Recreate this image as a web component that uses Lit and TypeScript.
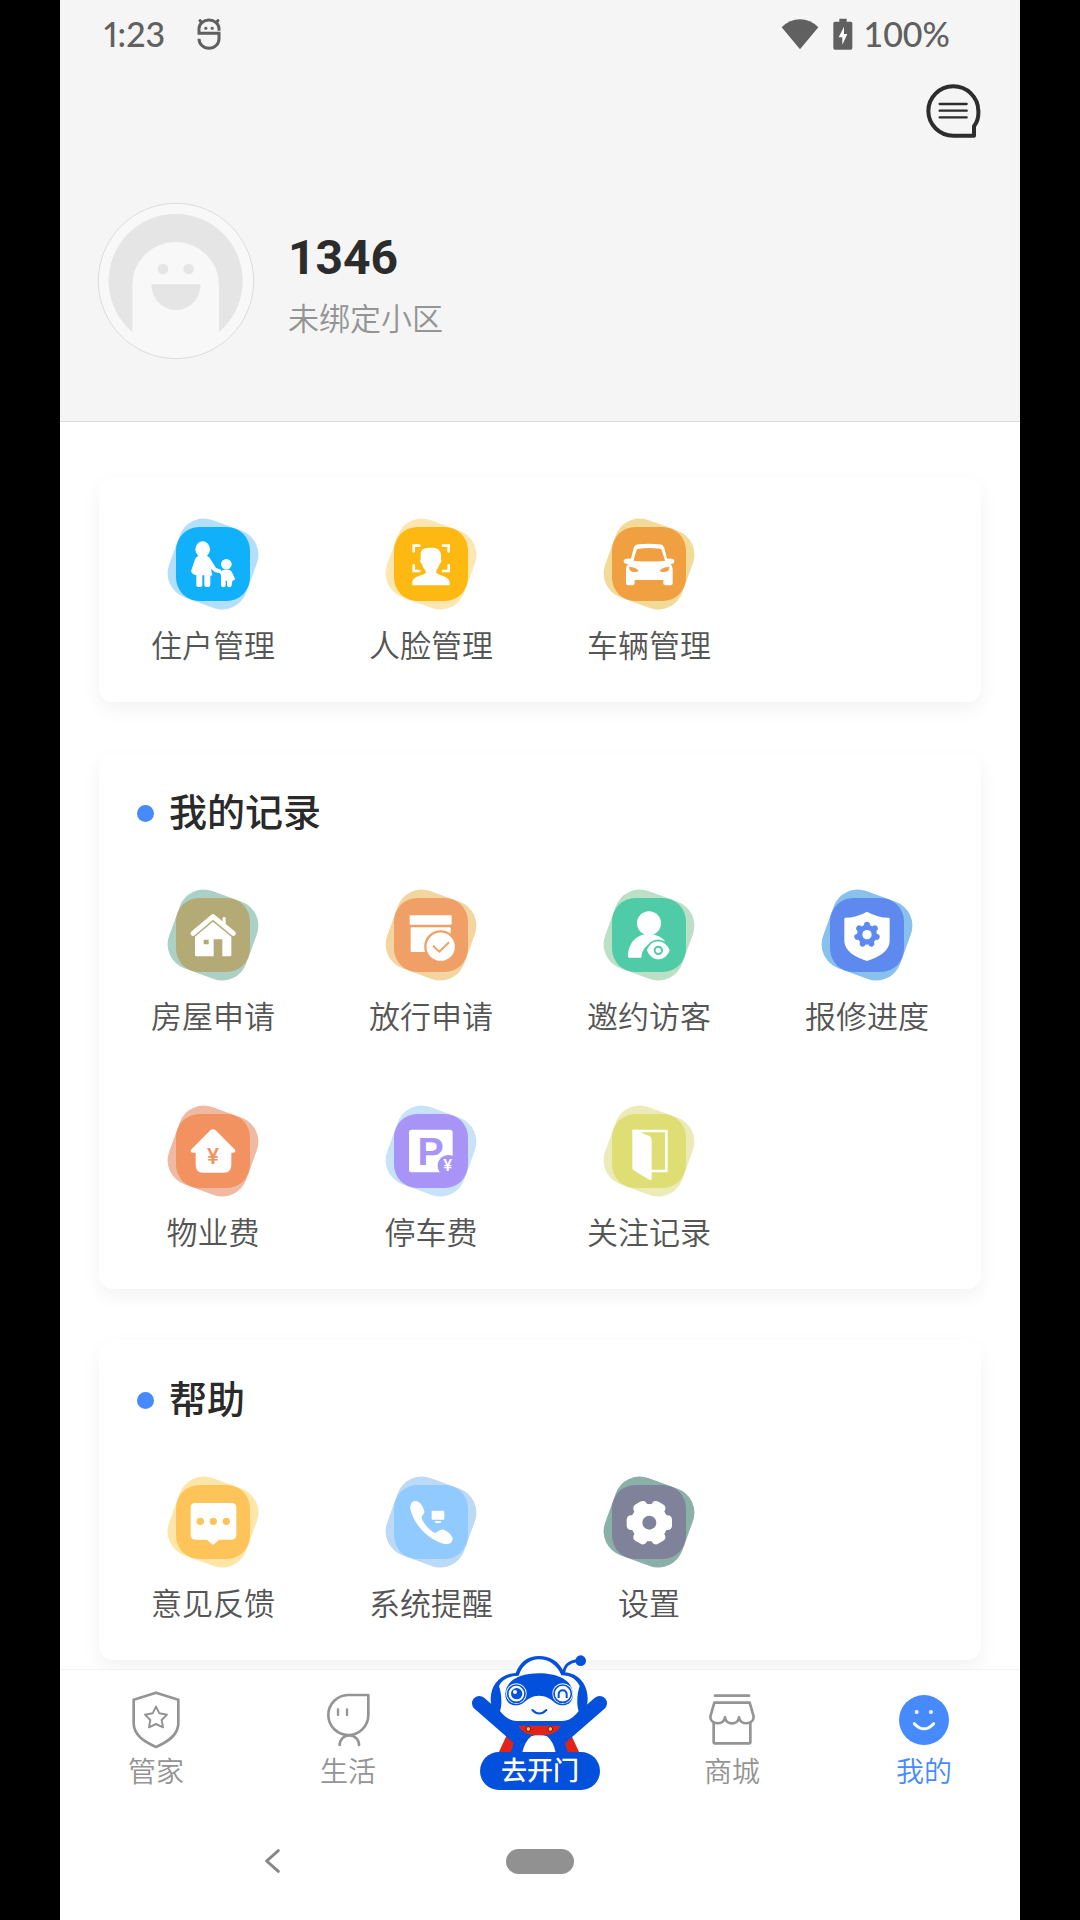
import { LitElement, css, html, svg, type SVGTemplateResult } from 'lit'
import { customElement, property } from 'lit/decorators.js'
import { classMap } from 'lit/directives/class-map.js'

interface Entry {
  label: string
  front: string
  back: string
  glyph: SVGTemplateResult
}

interface Section {
  title?: string
  entries: Entry[]
}

interface Tab {
  label: string
  active?: boolean
  glyph: SVGTemplateResult
}

const spokes = (count: number) => Array.from({ length: count }, (_, i) => (i * 360) / count)

const sections: Section[] = [
  {
    entries: [
      {
        label: '住户管理',
        front: '#10b0fa',
        back: '#b3dffa',
        glyph: svg`
          <ellipse cx="107" cy="94" rx="22" ry="24" />
          <path d="M94 114H121Q128 117 132 126L147 150L164 156L160 166L143 162L132 152L136 172L130 173V200Q130 207 121 207Q112 207 112 200V172H106V200Q106 207 97 207Q88 207 88 200V172Q76 170 72 160L84 124Q87 116 94 114Z" />
          <circle cx="178" cy="139" r="16" />
          <path d="M168 156H188Q194 158 197 167L205 184L196 189L194 202Q193 208 187 208Q181 208 180 202V188H176V202Q175 208 169 208Q163 208 162 202V172L158 164Z" />`,
      },
      {
        label: '人脸管理',
        front: '#fdb912',
        back: '#fde6b0',
        glyph: svg`
          <path fill="none" stroke="#fff" stroke-width="8" stroke-linecap="round" d="M86 100V83H103M174 83H191V100M86 142V159H103M174 159H191V142" />
          <path d="M107 108C107 90 124 89 137 89C156 88 168 96 168 112V124C171 128 169 136 164 138C160 150 156 154 154 158V164C156 172 194 172 194 194V202H82V194C82 172 120 172 122 164V158C118 154 114 150 111 138C106 136 104 128 107 124Z" />`,
      },
      {
        label: '车辆管理',
        front: '#f0a040',
        back: '#f2da98',
        glyph: svg`
          <path fill-rule="evenodd" d="M84 122L92 90Q96 80 106 79Q138 75 170 79Q180 80 184 90L192 122Q214 120 214 130Q214 138 203 138Q209 144 209 154V196Q209 202 203 202H187Q181 202 181 196V186H95V196Q95 202 89 202H75Q69 202 69 196V154Q69 144 75 138Q62 138 62 130Q62 120 84 122ZM91 128Q138 133 186 128L176 96Q174 92 170 92Q138 88 108 92Q103 92 101 96Z" />
          <path fill="#f0a040" d="M78 147Q96 146 107 158Q104 163 92 162Q78 160 78 147ZM199 147Q181 146 170 158Q173 163 185 162Q199 160 199 147Z" />`,
      },
    ],
  },
  {
    title: '我的记录',
    entries: [
      {
        label: '房屋申请',
        front: '#b4aa76',
        back: '#abd0c5',
        glyph: svg`
          <path fill="none" stroke="#fff" stroke-width="15" stroke-linecap="round" stroke-linejoin="round" d="M78 133L138 83L199 133" />
          <path d="M167 104V88Q167 84 171 84Q176 84 176 88V112Z" />
          <path fill-rule="evenodd" d="M84 143L138 98L193 143V198Q193 202 189 202H166V151H140V202H88Q84 202 84 198ZM110 152V166H125V152Z" />`,
      },
      {
        label: '放行申请',
        front: '#f0a066',
        back: '#f3d5a0',
        glyph: svg`
          <rect x="74" y="79" width="126" height="28" rx="3" />
          <rect x="77" y="115" width="120" height="74" rx="3" />
          <circle cx="167" cy="173" r="46" stroke="#f0a066" stroke-width="7" />
          <path fill="none" stroke="#f0a066" stroke-width="6" d="M144 170L163 188L192 160" />`,
      },
      {
        label: '邀约访客',
        front: '#50cba8',
        back: '#bcdfc8',
        glyph: svg`
          <circle cx="138" cy="103" r="36" />
          <path d="M75 202C75 162 102 136 132 136C156 134 178 144 187 158C150 152 116 170 115 206H79Q75 206 75 202Z" />
          <path stroke="#50cba8" stroke-width="5" d="M129 184Q140 154 166 154Q192 156 203 184Q192 212 166 214Q140 212 129 184Z" />
          <circle cx="166" cy="184" r="11" fill="none" stroke="#50cba8" stroke-width="6" />`,
      },
      {
        label: '报修进度',
        front: '#5e8af0',
        back: '#88c2ec',
        glyph: svg`
          <path d="M138 68Q170 86 203 86Q206 86 206 90V156C206 186 172 206 138 216C104 206 70 186 70 156V90Q70 86 73 86Q106 86 138 68Z" />
          <circle cx="138" cy="137" r="30" fill="#5e8af0" />
          ${spokes(7).map((a) => svg`<circle cx="138" cy="107" r="9" fill="#5e8af0" transform="rotate(${a} 138 137)" />`)}
          <circle cx="138" cy="137" r="14" />`,
      },
      {
        label: '物业费',
        front: '#f29260',
        back: '#efb9a2',
        glyph: svg`
          <path d="M130 76Q138 69 146 76L204 134Q208 142 198 143H193V180Q193 203 170 203H108Q86 203 86 180V143H78Q68 142 72 134Z" />
          <text class="yen" x="138" y="177" font-size="68" fill="#f29260">¥</text>`,
      },
      {
        label: '停车费',
        front: '#a893f6',
        back: '#c8e2f7',
        glyph: svg`
          <rect x="72" y="74" width="131" height="128" rx="8" />
          <text class="mark" x="137" y="181" font-size="118" fill="#a893f6">P</text>
          <circle cx="190" cy="182" r="32" fill="#a893f6" />
          <text class="yen" x="188" y="199" font-size="50">¥</text>`,
      },
      {
        label: '关注记录',
        front: '#dede74',
        back: '#ebebb8',
        glyph: svg`
          <path fill="none" stroke="#fff" stroke-width="8" d="M92 78H190V198H142" />
          <path d="M88 74H108Q112 84 138 92Q146 95 146 104V222Q146 228 140 225L92 196Q88 194 88 188Z" />`,
      },
    ],
  },
  {
    title: '帮助',
    entries: [
      {
        label: '意见反馈',
        front: '#fec45a',
        back: '#fee5a8',
        glyph: svg`
          <path d="M85 81H194Q208 81 208 95V177Q208 191 194 191H156L141 205Q138 207 135 205L120 191H85Q71 191 71 177V95Q71 81 85 81Z" />
          ${[100, 139, 178].map((x) => svg`<circle cx="${x}" cy="136" r="11" fill="#fec45a" />`)}`,
      },
      {
        label: '系统提醒',
        front: '#90caff',
        back: '#bcd9f5',
        glyph: svg`
          <path d="M90 75C104 74 114 90 118 106C120 114 108 118 110 127C117 146 136 164 150 171C160 168 164 158 176 161C190 166 202 178 203 188C203 200 192 206 178 204C130 192 86 146 76 98C75 84 81 76 90 75Z" />
          <rect x="140" y="104" width="38" height="27" rx="3" />
          <rect x="150" y="135" width="18" height="6" rx="3" />`,
      },
      {
        label: '设置',
        front: '#80829a',
        back: '#8ab0a8',
        glyph: svg`
          <circle cx="139" cy="140" r="56" />
          ${spokes(6).map((a) => svg`<rect x="117" y="72" width="44" height="40" rx="13" transform="rotate(${a + 30} 139 140)" />`)}
          <circle cx="139" cy="140" r="21" fill="#80829a" />`,
      },
    ],
  },
]

const leftTabs: Tab[] = [
  {
    label: '管家',
    glyph: svg`
      <path d="M78 8L145 29V100C145 135 115 155 78 171C42 155 11 135 11 100V29Z" />
      <path stroke-width="6" d="M78 50L88 70L111 74L95 90L99 112L78 102L57 112L61 90L45 74L68 70Z" />`,
  },
  {
    label: '生活',
    glyph: svg`
      <path d="M139 15H78A60 60 0 1 0 139 75Z" />
      <path stroke-width="7" d="M48 58V75M75 58V75" />
      <path d="M53 165A29 29 0 0 1 111 165" />`,
  },
]

const rightTabs: Tab[] = [
  {
    label: '商城',
    glyph: svg`
      <path d="M27 17H129" />
      <path d="M25 38H131L143 80C143 106 102 106 99 82C96 106 60 106 57 82C54 106 13 106 13 80Z" />
      <path d="M23 98V156Q23 160 27 160H129Q133 160 133 156V98" />`,
  },
  {
    label: '我的',
    active: true,
    glyph: svg`
      <circle cx="78" cy="90" r="75" fill="currentColor" stroke="none" />
      <circle cx="56" cy="66" r="6" fill="#fff" stroke="none" />
      <circle cx="99" cy="66" r="6" fill="#fff" stroke="none" />
      <path stroke="#fff" stroke-width="9" d="M49 101Q78 132 107 101" />`,
  },
]

@customElement('status-bar')
export class StatusBar extends LitElement {
  static styles = css`
    :host {
      display: flex;
      align-items: center;
      justify-content: space-between;
      height: 68px;
      padding: 0 70px 0 44px;
      color: #606060;
      font: 500 34px/40px Lato, 'Open Sans', sans-serif;
    }
    .group {
      display: flex;
      align-items: center;
    }
    .clock {
      min-width: 93px;
      font-variant-numeric: proportional-nums;
    }
    .debug {
      width: 24px;
      height: 32px;
    }
    .wifi {
      width: 38px;
      height: 32px;
      margin-right: 14px;
    }
    .battery {
      width: 20px;
      height: 32px;
      margin-right: 10px;
    }
  `

  render() {
    return html`
      <div class="group">
        <span class="clock">1:23</span>
        <svg class="debug" viewBox="0 0 72 96" fill="none" stroke="currentColor" stroke-width="9" aria-hidden="true">
          <path d="M66 38V32A30 26 0 0 0 6 32V46H66V62A30 29 0 0 1 6 62" />
          <path stroke-linecap="round" d="M9 8L14 13M63 8L58 13M26 31h1M45 31h1" />
        </svg>
      </div>
      <div class="group">
        <svg class="wifi" viewBox="0 0 114 96" fill="currentColor" aria-hidden="true">
          <path d="M57 94L2 28Q26 4 57 4Q88 4 112 28Z" />
        </svg>
        <svg class="battery" viewBox="0 0 60 96" aria-hidden="true">
          <path fill="currentColor" d="M19 2H41V11H53Q58 11 58 16V90Q58 95 53 95H6Q1 95 1 90V16Q1 11 6 11H19Z" />
          <path fill="#fff" d="M33 26L17 58H28V80L43 48H33Z" />
        </svg>
        <span>100%</span>
      </div>
    `
  }
}

@customElement('menu-card')
export class MenuCard extends LitElement {
  @property({ attribute: false }) section: Section = { entries: [] }

  static styles = css`
    :host {
      display: block;
      padding: 32px 5px 33px;
      border-radius: 14px;
      background: #fff;
      box-shadow: 0 8px 20px rgba(0, 0, 0, 0.05);
    }
    h2 {
      display: flex;
      align-items: center;
      gap: 15px;
      margin: 0 0 48px;
      padding-left: 33px;
      color: #2a2a2a;
      font-size: 38px;
      font-weight: 500;
      line-height: 56px;
    }
    h2::before {
      content: '';
      width: 17px;
      height: 17px;
      border-radius: 50%;
      background: #468afe;
    }
    .grid {
      display: grid;
      grid-template-columns: repeat(4, 1fr);
      row-gap: 65px;
    }
    .grid.bare {
      padding-top: 9px;
    }
    button {
      display: flex;
      flex-direction: column;
      align-items: center;
      gap: 15px;
      padding: 0;
      border: 0;
      background: none;
      color: #555;
      font: inherit;
      font-size: 31px;
      line-height: 44px;
      cursor: pointer;
    }
    svg {
      width: 92px;
      height: 92px;
    }
    .mark {
      font-family: 'Liberation Sans', Arial, sans-serif;
      font-weight: 700;
      text-anchor: middle;
    }
    .yen {
      font-family: Roboto, sans-serif;
      font-weight: 500;
      text-anchor: middle;
    }
  `

  render() {
    const { title, entries } = this.section
    return html`
      ${title ? html`<h2>${title}</h2>` : ''}
      <div class=${classMap({ grid: true, bare: !title })}>
        ${entries.map(
          (e) => html`
            <button type="button">
              <svg viewBox="0 0 276 276" fill="#fff" aria-hidden="true">
                <rect x="15" y="15" width="246" height="246" rx="76" fill=${e.back} transform="rotate(20 138 138)" />
                <rect x="27" y="27" width="222" height="222" rx="70" fill=${e.front} />
                ${e.glyph}
              </svg>
              <span>${e.label}</span>
            </button>
          `
        )}
      </div>
    `
  }
}

@customElement('tab-bar')
export class TabBar extends LitElement {
  static styles = css`
    :host {
      display: block;
      position: relative;
      border-top: 1px solid #f2f2f2;
      background: #fff;
    }
    nav {
      display: grid;
      grid-template-columns: repeat(5, 1fr);
      grid-template-rows: 132px;
    }
    button {
      display: flex;
      flex-direction: column;
      align-items: center;
      gap: 5px;
      padding: 20px 0 0;
      border: 0;
      background: none;
      color: #949494;
      font: inherit;
      font-size: 28px;
      line-height: 36px;
      cursor: pointer;
    }
    .active {
      color: #468afe;
    }
    .icon {
      width: 52px;
      height: 60px;
    }
    /* the robot is taller than the bar and grows out of its top edge */
    .door {
      justify-content: flex-end;
      gap: 0;
      min-height: 0;
      padding: 0 0 12px;
    }
    .robot {
      flex: none;
      width: 136px;
      height: 97px;
    }
    .pill {
      padding: 0 21px;
      border-radius: 19px;
      background: #0350dc;
      color: #fff;
      font-size: 26px;
      font-weight: 500;
      line-height: 38px;
    }
  `

  private renderTab(tab: Tab) {
    return html`
      <button type="button" class=${classMap({ active: !!tab.active })}>
        <svg class="icon" viewBox="0 0 156 180" fill="none" stroke="currentColor" stroke-width="8"
          stroke-linecap="round" stroke-linejoin="round" aria-hidden="true">${tab.glyph}</svg>
        <span>${tab.label}</span>
      </button>
    `
  }

  render() {
    return html`
      <nav>
        ${leftTabs.map((t) => this.renderTab(t))}
        <button type="button" class="door">
          <svg class="robot" viewBox="96 45 408 291" fill="#0350dc" aria-hidden="true">
            <path fill="#e2231a" d="M200 286L230 300L215 338H176ZM394 286L364 300L380 338H418Z" />
            <path d="M205 235H390L372 300L384 338H212L224 300Z" />
            <path stroke="#0350dc" stroke-width="44" stroke-linecap="round" d="M118 190L235 292M479 190L362 292" />
            <path fill="#fff" d="M247 338Q254 304 274 289Q297 281 321 289Q340 304 347 338Z" />
            <path fill="#e2231a" d="M235 257H363Q348 288 298 286Q250 288 235 257Z" />
            <g fill="#fbc34a" stroke="#7d1508" stroke-width="3">
              <circle cx="265" cy="267" r="7" />
              <circle cx="331" cy="267" r="7" />
            </g>
            <path fill="none" stroke="#0350dc" stroke-width="8" d="M370 102Q374 66 412 62" />
            <circle cx="422" cy="62" r="16" />
            <path d="M227 99C240 64 266 48 297 48C330 48 358 64 372 97C416 99 444 134 443 178C443 204 430 219 417 220L385 247H212L180 220C162 216 152 200 152 178C152 134 182 101 227 99Z" />
            <path fill="#fff" d="M236 107C247 73 272 58 297 58C326 58 352 75 364 106C394 106 410 120 419 138C410 165 410 195 416 213C402 231 388 243 365 243H230C210 243 194 231 180 213C186 195 186 165 177 138C186 119 205 108 236 107Z" />
            <path d="M196 162C198 118 244 100 297 100C350 100 397 118 399 162C399 184 386 196 368 196C340 196 338 168 297 167C258 168 256 196 228 196C208 196 196 184 196 162Z" />
            <g fill="#fff" stroke="#0350dc" stroke-width="5">
              <circle cx="229" cy="161" r="31" stroke="none" />
              <circle cx="368" cy="161" r="31" stroke="none" />
              <circle cx="229" cy="161" r="26" />
              <circle cx="368" cy="161" r="26" />
              <path fill="none" stroke-width="6" d="M356 174V163A12 12 0 0 1 380 163V174" />
            </g>
            <circle cx="230" cy="161" r="17" />
            <circle cx="225" cy="156" r="6" fill="#fff" />
            <path fill="none" stroke="#0350dc" stroke-width="6" stroke-linecap="round" d="M277 210Q298 231 319 210" />
          </svg>
          <span class="pill">去开门</span>
        </button>
        ${rightTabs.map((t) => this.renderTab(t))}
      </nav>
    `
  }
}

@customElement('app-root')
export class AppRoot extends LitElement {
  static styles = css`
    :host {
      display: block;
      padding: 0 60px;
      background: #000;
      font-family: Roboto, 'Noto Sans CJK SC', sans-serif;
      font-weight: 350;
    }
    .screen {
      display: flex;
      flex-direction: column;
      min-height: 100vh;
      background: #fff;
    }
    header {
      border-bottom: 1px solid #dcdcdc;
      background: #f5f5f5;
    }
    .tools {
      display: flex;
      justify-content: flex-end;
      padding: 16px 39px 0;
    }
    .tools button,
    .system button {
      display: flex;
      padding: 0;
      border: 0;
      background: none;
      cursor: pointer;
    }
    .message {
      width: 55px;
      height: 54px;
    }
    .profile {
      display: flex;
      gap: 33px;
      padding: 64px 37px 61px;
    }
    .avatar {
      width: 158px;
      height: 158px;
    }
    .who {
      display: flex;
      flex-direction: column;
      gap: 12px;
      padding-top: 28px;
    }
    h1 {
      margin: 0;
      color: #2c2c2c;
      font-size: 48px;
      font-weight: 700;
      line-height: 56px;
    }
    .who p {
      margin: 0;
      color: #949494;
      font-size: 31px;
      line-height: 44px;
    }
    main {
      display: flex;
      flex: 1;
      flex-direction: column;
      gap: 51px;
      padding: 55px 39px 9px;
      overflow: hidden;
    }
    .system {
      display: grid;
      grid-template-columns: repeat(5, 1fr);
      align-items: center;
      height: 118px;
    }
    .back {
      grid-column: 2;
      justify-self: start;
      margin-left: 10px;
    }
    .back svg {
      width: 20px;
      height: 26px;
    }
    .home {
      grid-column: 3;
      justify-self: center;
    }
    .home span {
      width: 68px;
      height: 25px;
      border-radius: 13px;
      background: #919191;
    }
  `

  render() {
    return html`
      <div class="screen">
        <header>
          <status-bar></status-bar>
          <div class="tools">
            <button type="button" aria-label="消息">
              <svg class="message" viewBox="0 0 165 162" fill="none" stroke="#2d2d2d" stroke-linejoin="round" stroke-linecap="round">
                <path stroke-width="12" d="M82 155H144V127Q159 108 157 80A75 74 0 1 0 82 155Z" />
                <path stroke-width="7" d="M41 60H122M41 80H122M41 100H122" />
              </svg>
            </button>
          </div>
          <div class="profile">
            <svg class="avatar" viewBox="0 0 474 474" aria-hidden="true">
              <circle cx="237" cy="237" r="233" fill="#f8f8f8" stroke="#dcdcdc" stroke-width="3" />
              <path fill="#e5e5e5" d="M106 390A201 201 0 1 1 366 390V248A129 127 0 0 0 106 248Z" />
              <circle cx="198" cy="201" r="16" fill="#e5e5e5" />
              <circle cx="275" cy="201" r="16" fill="#e5e5e5" />
              <path fill="#e5e5e5" d="M163 247H311A74 77 0 0 1 163 247Z" />
            </svg>
            <div class="who">
              <h1>1346</h1>
              <p>未绑定小区</p>
            </div>
          </div>
        </header>
        <main>${sections.map((s) => html`<menu-card .section=${s}></menu-card>`)}</main>
        <tab-bar></tab-bar>
        <div class="system">
          <button type="button" class="back" aria-label="返回">
            <svg viewBox="0 0 60 78" fill="none" stroke="#868686" stroke-width="9" stroke-linecap="round" stroke-linejoin="round">
              <path d="M49 8L14 39L49 70" />
            </svg>
          </button>
          <button type="button" class="home" aria-label="主屏幕"><span></span></button>
        </div>
      </div>
    `
  }
}
